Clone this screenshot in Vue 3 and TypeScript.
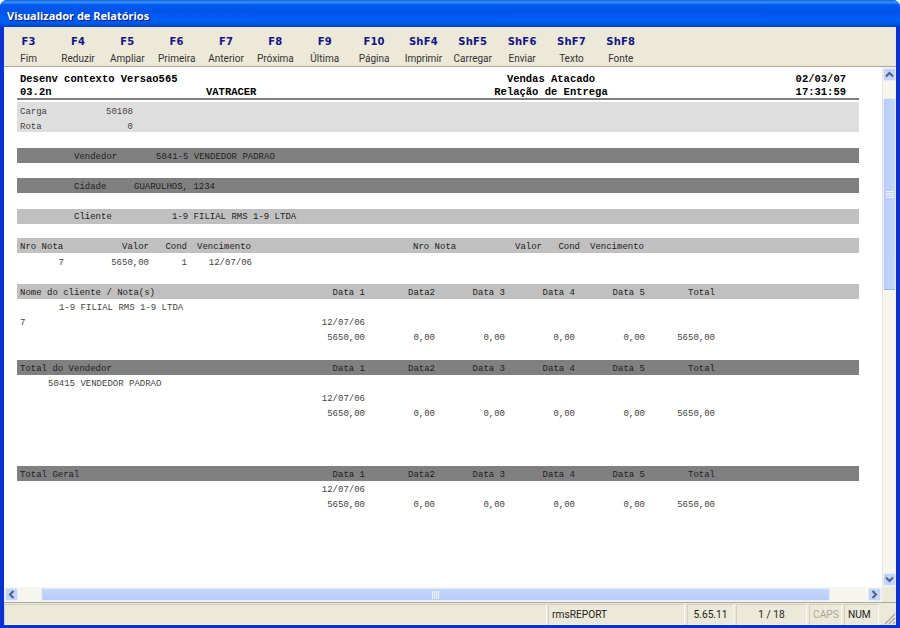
<script setup lang="ts">
const keys = [
  ['F3', 'Fim'], ['F4', 'Reduzir'], ['F5', 'Ampliar'], ['F6', 'Primeira'], ['F7', 'Anterior'],
  ['F8', 'Próxima'], ['F9', 'Última'], ['F10', 'Página'], ['ShF4', 'Imprimir'], ['ShF5', 'Carregar'],
  ['ShF6', 'Enviar'], ['ShF7', 'Texto'], ['ShF8', 'Fonte'],
]
const heads = ['Data 1', 'Data2', 'Data 3', 'Data 4', 'Data 5', 'Total']
const values = ['5650,00', '0,00', '0,00', '0,00', '0,00', '5650,00']
const noteHeads = ['Nro Nota', 'Valor', 'Cond', 'Vencimento']
const noteValues = ['7', '5650,00', '1', '12/07/06']
</script>

<template>
  <div class="window">
    <div class="titlebar">Visualizador de Relatórios</div>
    <div class="frame">
      <div class="toolbar">
        <div v-for="k in keys" :key="k[0]" class="tool">
          <span class="tool-key">{{ k[0] }}</span>
          <span class="tool-label">{{ k[1] }}</span>
        </div>
      </div>

      <div class="main">
        <div class="report">
          <div class="head-row">
            <span class="span2">Desenv contexto Versao565</span>
            <span class="center">Vendas Atacado</span>
            <span class="right">02/03/07</span>
          </div>
          <div class="head-row">
            <span>03.2n</span>
            <span>VATRACER</span>
            <span class="center">Relação de Entrega</span>
            <span class="right">17:31:59</span>
          </div>
          <div class="rule"></div>

          <div class="box">
            <div class="pair"><span>Carga</span><span class="right">50108</span></div>
            <div class="pair"><span>Rota</span><span class="right">0</span></div>
          </div>

          <div class="bar dark group vend"><span>Vendedor</span><span>5041-5 VENDEDOR PADRAO</span></div>
          <div class="bar dark group city"><span>Cidade</span><span>GUARULHOS, 1234</span></div>
          <div class="bar light group client"><span>Cliente</span><span>1-9 FILIAL RMS 1-9 LTDA</span></div>

          <div class="bar light notes">
            <span v-for="(h, i) in noteHeads" :key="'a' + i" :class="{ right: i === 1 || i === 2 }">{{ h }}</span>
            <span></span>
            <span v-for="(h, i) in noteHeads" :key="'b' + i" :class="{ right: i === 1 || i === 2 }">{{ h }}</span>
          </div>
          <div class="row notes note-values">
            <span v-for="(v, i) in noteValues" :key="i" class="right">{{ v }}</span>
          </div>

          <div class="bar light amounts customers">
            <span>Nome do cliente / Nota(s)</span>
            <span v-for="h in heads" :key="h" class="right">{{ h }}</span>
          </div>
          <div class="row indent-a">1-9 FILIAL RMS 1-9 LTDA</div>
          <div class="row amounts"><span>7</span><span class="right">12/07/06</span></div>
          <div class="row amounts">
            <span></span><span v-for="(v, i) in values" :key="i" class="right">{{ v }}</span>
          </div>

          <div class="bar dark amounts seller">
            <span>Total do Vendedor</span>
            <span v-for="h in heads" :key="h" class="right">{{ h }}</span>
          </div>
          <div class="row indent-b">50415 VENDEDOR PADRAO</div>
          <div class="row amounts"><span></span><span class="right">12/07/06</span></div>
          <div class="row amounts">
            <span></span><span v-for="(v, i) in values" :key="i" class="right">{{ v }}</span>
          </div>

          <div class="bar dark amounts grand">
            <span>Total Geral</span>
            <span v-for="h in heads" :key="h" class="right">{{ h }}</span>
          </div>
          <div class="row amounts"><span></span><span class="right">12/07/06</span></div>
          <div class="row amounts">
            <span></span><span v-for="(v, i) in values" :key="i" class="right">{{ v }}</span>
          </div>
        </div>

        <div class="vscroll">
          <div class="sbtn">
            <svg width="9" height="7" viewBox="0 0 9 7"><path d="M1 5.5 L4.5 2 L8 5.5" fill="none" stroke="#4d6185" stroke-width="2"/></svg>
          </div>
          <div class="vtrack">
            <div class="vthumb">
              <svg width="8" height="7" viewBox="0 0 8 7"><path d="M0 .5H8M0 2.5H8M0 4.5H8M0 6.5H8" stroke="#eef3fe" stroke-width="1"/></svg>
            </div>
          </div>
          <div class="sbtn">
            <svg width="9" height="7" viewBox="0 0 9 7"><path d="M1 1.5 L4.5 5 L8 1.5" fill="none" stroke="#4d6185" stroke-width="2"/></svg>
          </div>
        </div>
      </div>

      <div class="hbar">
        <div class="hscroll">
          <div class="sbtn">
            <svg width="7" height="9" viewBox="0 0 7 9"><path d="M5.5 1 L2 4.5 L5.5 8" fill="none" stroke="#4d6185" stroke-width="2"/></svg>
          </div>
          <div class="htrack">
            <div class="hthumb">
              <svg width="7" height="8" viewBox="0 0 7 8"><path d="M.5 0V8M2.5 0V8M4.5 0V8M6.5 0V8" stroke="#eef3fe" stroke-width="1"/></svg>
            </div>
          </div>
          <div class="sbtn">
            <svg width="7" height="9" viewBox="0 0 7 9"><path d="M1.5 1 L5 4.5 L1.5 8" fill="none" stroke="#4d6185" stroke-width="2"/></svg>
          </div>
        </div>
      </div>

      <div class="status">
        <div class="panel fill"></div>
        <div class="panel p-name">rmsREPORT</div>
        <div class="panel p-ver">5.65.11</div>
        <div class="panel p-page">1 / 18</div>
        <div class="panel p-caps">CAPS</div>
        <div class="panel p-num">NUM</div>
        <div class="grip">
          <svg width="13" height="13" viewBox="0 0 13 13"><path d="M12 2 L2 12 M12 6 L6 12 M12 10 L10 12" stroke="#a8a594" stroke-width="1.2" fill="none"/></svg>
        </div>
      </div>
    </div>
  </div>
</template>

<style scoped>
.window {
  width: 900px;
  height: 628px;
  display: flex;
  flex-direction: column;
  overflow: hidden;
  border-radius: 7px 7px 0 0;
  background: #0831d9;
}
.titlebar {
  height: 27px;
  flex: none;
  box-sizing: border-box;
  padding: 7px 0 0 7px;
  color: #fff;
  font: bold 11px/18px "Noto Sans", sans-serif;
  text-shadow: 1px 1px 1px #0f1089;
  background: linear-gradient(180deg, #0a5fd8 0, #3a93ff 2px, #0058ee 5px, #0054e9 12px, #0060f8 20px, #0055e5 24px, #0040c8 27px);
}
.frame {
  flex: 1;
  min-height: 0;
  display: flex;
  flex-direction: column;
  margin: 0 4px 3px;
  background: #ece9d8;
}
.toolbar {
  height: 40px;
  flex: none;
  box-sizing: border-box;
  display: flex;
  border-bottom: 1px solid #aca899;
}
.tool {
  width: 49.35px;
  flex: none;
  display: flex;
  flex-direction: column;
  align-items: center;
  padding-top: 8px;
}
.tool-key {
  font: bold 10px/14px "DejaVu Sans", sans-serif;
  color: #14148c;
  letter-spacing: 0.2px;
}
.tool-label {
  margin-top: 3px;
  font: 10px/14px "Roboto", sans-serif;
  color: #333;
}
.main {
  height: 520px;
  flex: none;
  display: flex;
}
.report {
  width: 879px;
  flex: none;
  box-sizing: border-box;
  padding: 5px 0 0 13px;
  background: #fff;
  border-right: 1px solid #e8e6da;
  font: 9px/18px "Liberation Mono", monospace;
  color: #444;
  overflow: hidden;
}
.right { text-align: right; }
.center { text-align: center; }
.head-row {
  width: 842px;
  height: 13px;
  box-sizing: border-box;
  padding-left: 3px;
  display: grid;
  grid-template-columns: 186px 288px 114px 238px;
  font: bold 10.5px/15px "Liberation Mono", monospace;
  color: #000;
  white-space: nowrap;
}
.span2 { grid-column: span 2; }
.rule {
  width: 842px;
  height: 2px;
  margin-bottom: 2px;
  background: #808080;
}
.box {
  width: 842px;
  background: #dedede;
  padding-left: 3px;
  box-sizing: border-box;
}
.pair {
  height: 15px;
  display: grid;
  grid-template-columns: 113px;
  line-height: 20px;
}
.pair span:first-child { grid-area: 1 / 1; }
.pair span:last-child { grid-area: 1 / 1; }
.bar {
  width: 842px;
  height: 15px;
  box-sizing: border-box;
  padding-left: 3px;
  color: #222;
  white-space: nowrap;
}
.dark { background: #808080; }
.light { background: #c0c0c0; }
.group {
  display: grid;
  padding-left: 57px;
}
.vend { margin-top: 16px; grid-template-columns: 82px 1fr; }
.city { margin-top: 15px; grid-template-columns: 60px 1fr; }
.client { margin-top: 16px; grid-template-columns: 98px 1fr; line-height: 16px; }
.notes {
  display: grid;
  grid-template-columns: 44px 85px 38px 65px 161px 44px 85px 38px 65px;
  padding-left: 3px;
}
.notes > span:nth-child(4), .notes > span:nth-child(9) { padding-left: 10px; }
.bar.notes { margin-top: 14px; }
.row {
  width: 842px;
  height: 15px;
  box-sizing: border-box;
  padding-left: 3px;
  white-space: nowrap;
}
.note-values { margin-top: 1px; }
.note-values > span:nth-child(4) { padding-left: 0; }
.amounts {
  display: grid;
  grid-template-columns: 275px repeat(6, 70px);
  padding-left: 3px;
}
.customers { margin-top: 15px; }
.seller { margin-top: 16px; }
.grand { margin-top: 46px; }
.indent-a { padding-left: 42px; }
.indent-b { padding-left: 31px; }
.vscroll {
  width: 13px;
  flex: none;
  display: flex;
  flex-direction: column;
  padding: 1px 0;
  box-sizing: border-box;
  background: #f6f5ee;
}
.sbtn {
  width: 13px;
  height: 13px;
  flex: none;
  box-sizing: border-box;
  display: flex;
  align-items: center;
  justify-content: center;
  background: #c3d4fb;
  border: 1px solid #e4ecfd;
  border-radius: 2px;
}
.vtrack {
  flex: 1;
  padding-top: 17px;
}
.vthumb {
  width: 13px;
  height: 192px;
  box-sizing: border-box;
  display: flex;
  align-items: center;
  justify-content: center;
  background: linear-gradient(90deg, #b8cdfa, #c6d6fc);
  border: 1px solid #e4ecfd;
  border-bottom-color: #9fb2dc;
  border-radius: 2px;
}
.hbar {
  height: 15px;
  flex: none;
  display: flex;
  border-bottom: 1px solid #aca899;
  box-sizing: content-box;
}
.hscroll {
  width: 878px;
  flex: none;
  display: flex;
  padding: 1px;
  box-sizing: border-box;
  background: #f6f5ee;
}
.htrack {
  flex: 1;
  padding-left: 23px;
  padding-right: 38px;
}
.hthumb {
  height: 13px;
  box-sizing: border-box;
  display: flex;
  align-items: center;
  justify-content: center;
  background: linear-gradient(180deg, #c6d6fc, #b8cdfa);
  border: 1px solid #e4ecfd;
  border-radius: 2px;
}
.status {
  flex: 1;
  min-height: 0;
  display: flex;
  align-items: stretch;
  padding-top: 1px;
  font: 10.2px/20px "Roboto", sans-serif;
  color: #222;
}
.panel {
  box-sizing: border-box;
  flex: none;
  border: 1px solid;
  border-color: #d4d0bd #f8f7f0 #f8f7f0 #d4d0bd;
  margin-right: 2px;
  padding: 0 3px;
  white-space: nowrap;
  line-height: 19px;
}
.fill { width: 543px; margin-right: 1px; }
.p-name { width: 137px; }
.p-ver { width: 47px; text-align: center; }
.p-page { width: 71px; text-align: center; }
.p-caps { width: 33px; text-align: center; color: #aca899; }
.p-num { width: 35px; color: #222; margin-right: 0; }
.grip {
  flex: 1;
  display: flex;
  align-items: flex-end;
  justify-content: flex-end;
}
</style>

<style>
body { background: #fff; }
</style>
